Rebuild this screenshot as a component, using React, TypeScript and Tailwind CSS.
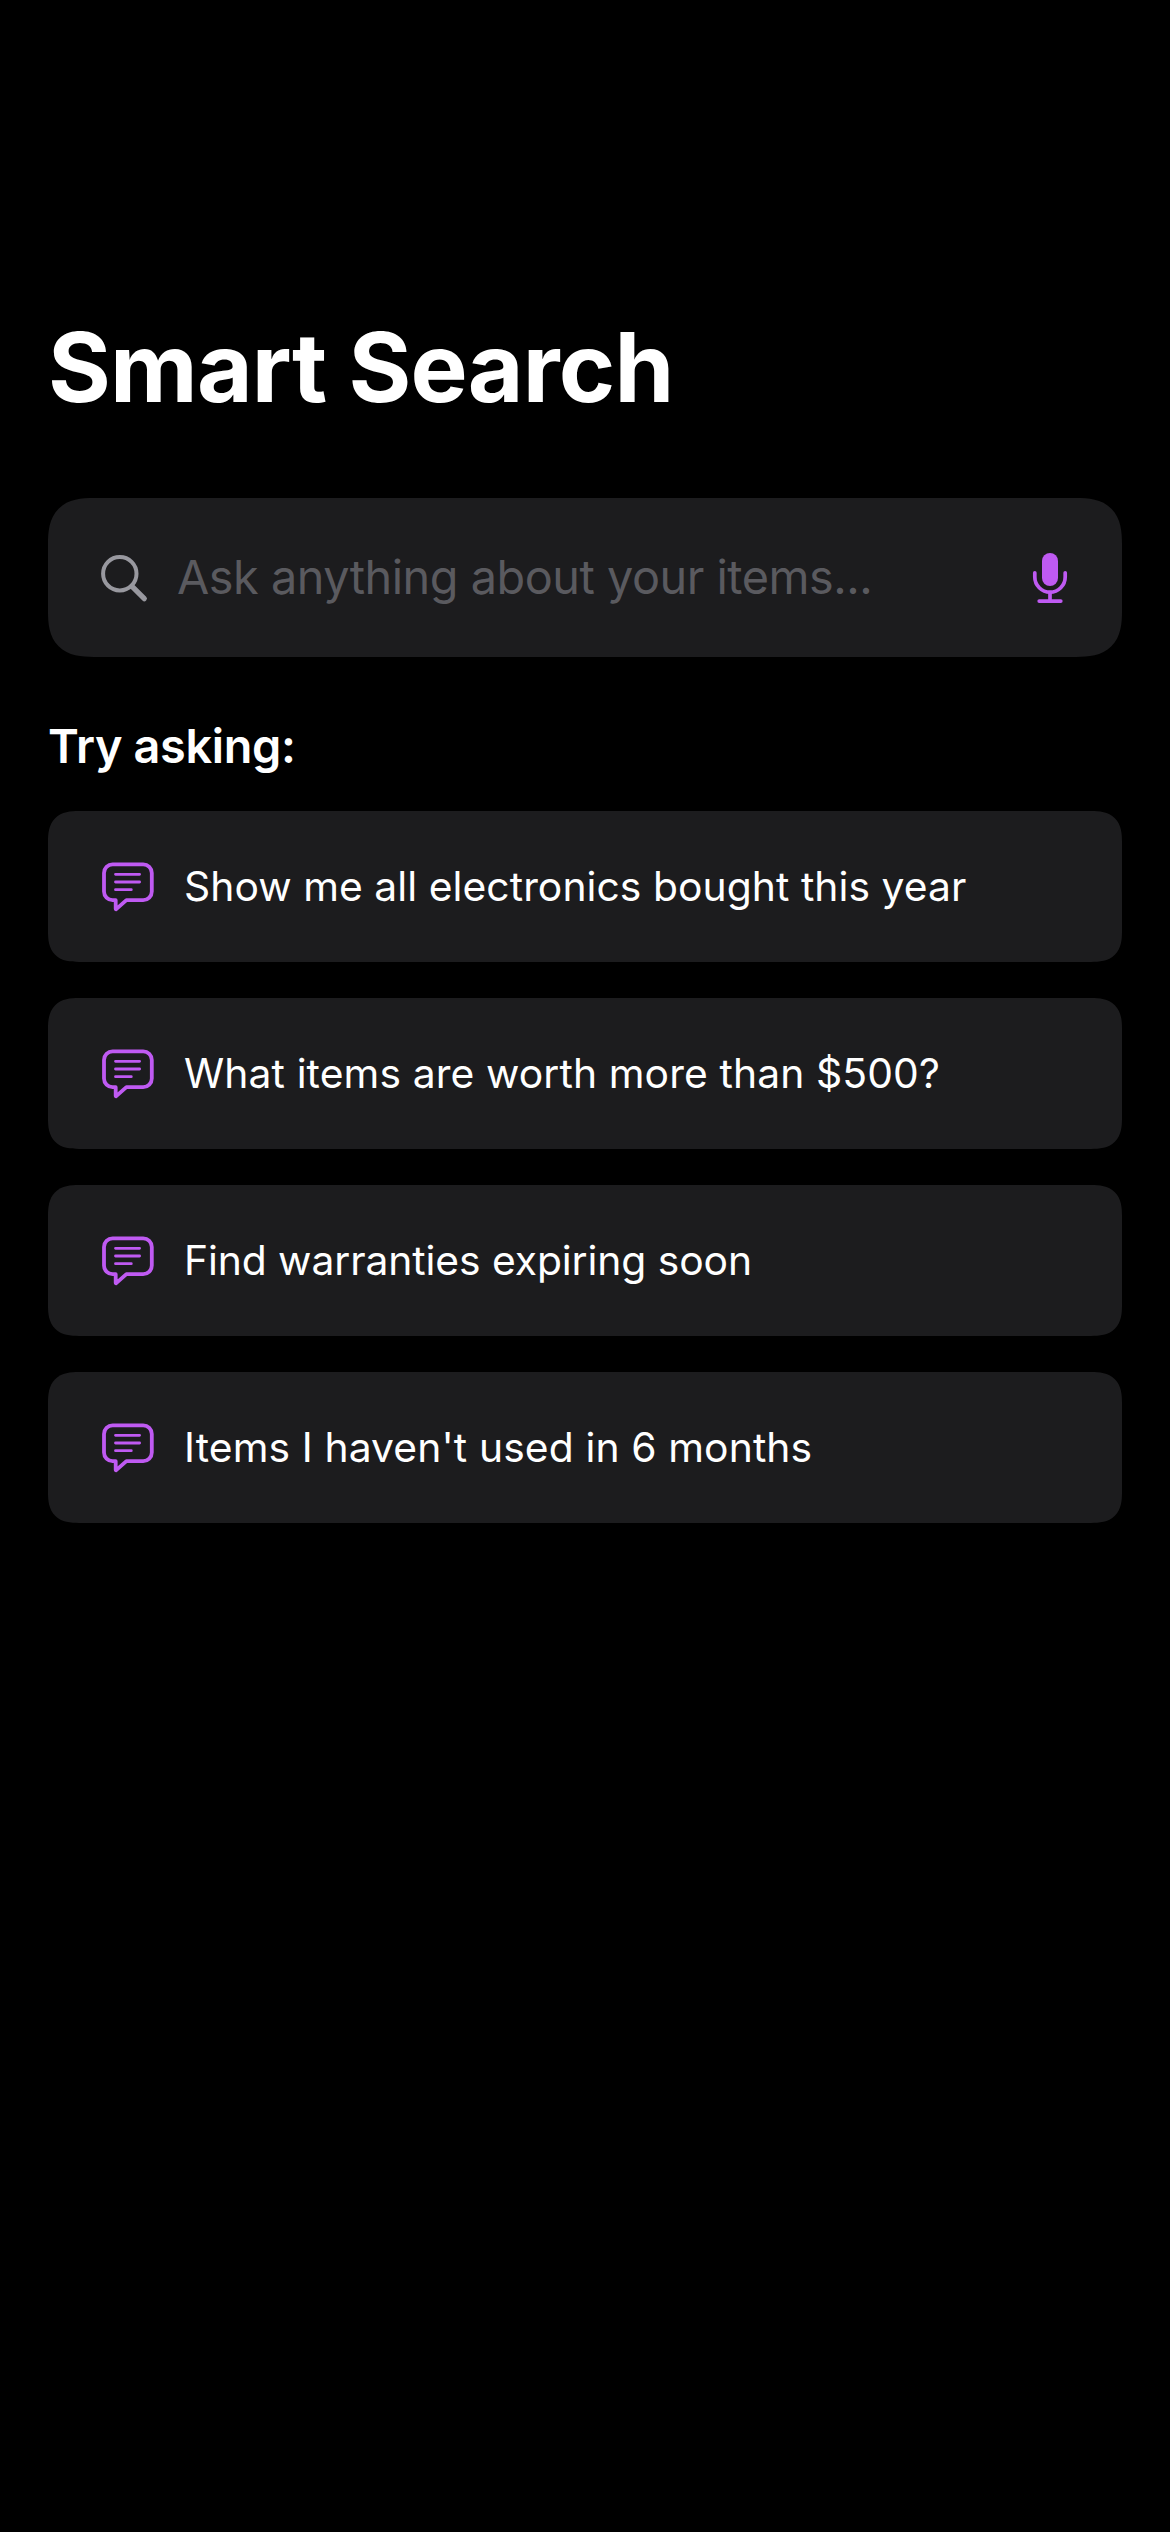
import React from "react";

const suggestions = [
  { text: "Show me all electronics bought this year", tracking: "tracking-[0.059px]" },
  { text: "What items are worth more than $500?", tracking: "tracking-[0.115px]" },
  { text: "Find warranties expiring soon", tracking: "tracking-[-0.08px]" },
  { text: "Items I haven't used in 6 months", tracking: "tracking-[0.12px]" },
];

function SearchIcon() {
  return (
    <svg className="h-[46px] w-[46px] shrink-0 overflow-visible text-[#98989f]" viewBox="0 0 46 46" fill="none" stroke="currentColor" strokeLinecap="round">
      <circle cx="19.8" cy="18.7" r="16.7" strokeWidth="4" />
      <path d="M32 31.3 44.3 43.7" strokeWidth="5.2" />
    </svg>
  );
}

function MicIcon() {
  return (
    <svg className="h-[51px] w-9 shrink-0 text-[#bf5af2]" viewBox="0 0 36 51" fill="none" stroke="currentColor" strokeWidth="3.7" strokeLinecap="round">
      <rect x="10" y="1" width="16" height="33" rx="8" fill="currentColor" stroke="none" />
      <path d="M2.8 20.8V25a15.2 15.2 0 0 0 30.4 0v-4.2" />
      <path d="M18 40.5V49M7.2 49.1h21.6" />
    </svg>
  );
}

function BubbleIcon() {
  return (
    <svg className="h-[51px] w-[54px] shrink-0 text-[#bf5af2]" viewBox="0 0 54 51" fill="none" stroke="currentColor" strokeLinecap="round" strokeLinejoin="round">
      <path d="M11.6 3.4H42.2A8.6 8.6 0 0 1 50.8 12V30.6A8.6 8.6 0 0 1 42.2 39.2H25.4L15.2 48.2Q14.7 48.4 14.7 47.8V39.2H11.6A8.6 8.6 0 0 1 3 30.6V12A8.6 8.6 0 0 1 11.6 3.4Z" strokeWidth="3.8" />
      <path d="M14.5 13.3H38.6M14.5 21H38.6M14.5 28.7H30.3" strokeWidth="2.8" />
    </svg>
  );
}

export default function App() {
  return (
    <main className="flex min-h-[2532px] w-full flex-col bg-black px-12 pt-[309px] font-['Inter',sans-serif] text-white">
      <h1 className="text-[96px] leading-[116px] font-bold tracking-[-0.78px]">Smart Search</h1>

      <div className="mt-[73px] flex h-[159px] items-center rounded-[36px] bg-[#1c1c1e] pr-[54px] pl-[52px] supports-[corner-shape:squircle]:rounded-[46px] supports-[corner-shape:squircle]:[corner-shape:superellipse(1.4)]">
        <SearchIcon />
        <span className="ml-[31px] flex-1 text-[46.8px] tracking-[-0.475px] whitespace-nowrap text-[#5a5a5f]">
          Ask anything about your items...
        </span>
        <MicIcon />
      </div>

      <h2 className="mt-[61px] text-[46.8px] leading-[56px] font-semibold tracking-[-0.325px]">Try asking:</h2>

      <ul className="mt-[37px] flex flex-col gap-9">
        {suggestions.map(({ text, tracking }) => (
          <li
            key={text}
            className="flex h-[151px] items-center gap-[29px] rounded-[24px] bg-[#1c1c1e] px-[53px] supports-[corner-shape:squircle]:rounded-[31px] supports-[corner-shape:squircle]:[corner-shape:superellipse(1.4)]"
          >
            <BubbleIcon />
            <span className={`text-[40.8px] whitespace-nowrap ${tracking}`}>{text}</span>
          </li>
        ))}
      </ul>
    </main>
  );
}
